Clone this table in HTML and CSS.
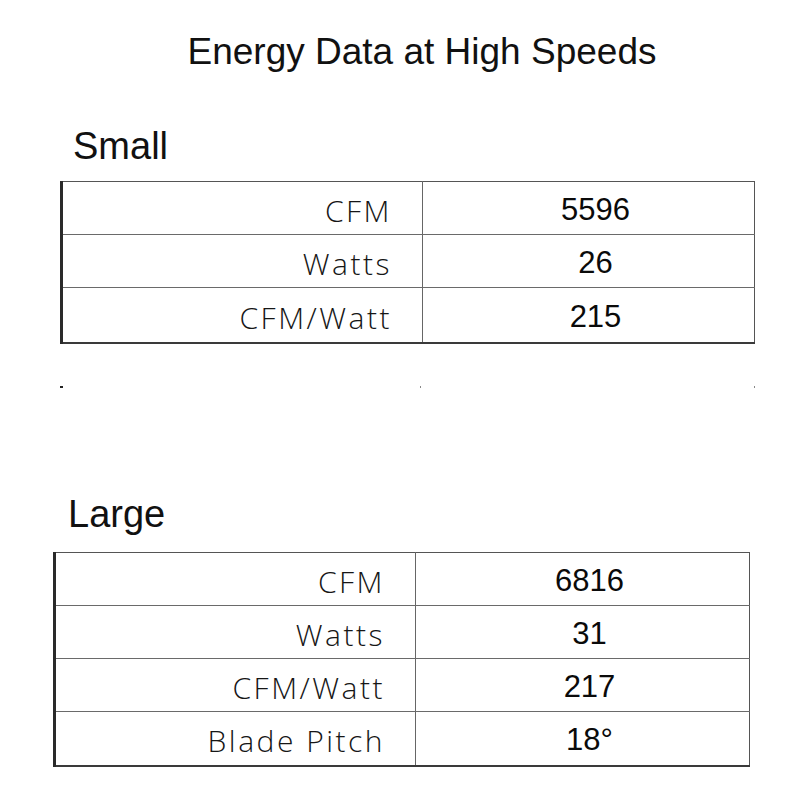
FILE: index.html
```html
<!DOCTYPE html>
<html>
<head>
<meta charset="utf-8">
<link rel="stylesheet" href="styles.css">
</head>
<body>
<div class="page">
  <h1 class="title">Energy Data at High Speeds</h1>

  <h2 class="heading heading-small">Small</h2>
  <table class="data data-small">
    <tr><td class="label">CFM</td><td class="value">5596</td></tr>
    <tr><td class="label">Watts</td><td class="value">26</td></tr>
    <tr><td class="label">CFM/Watt</td><td class="value">215</td></tr>
  </table>
  <div class="stub">
    <span class="mark mark-dark"></span>
    <span class="mark mark-mid"></span>
    <span class="mark mark-end"></span>
  </div>

  <h2 class="heading heading-large">Large</h2>
  <table class="data data-large">
    <tr><td class="label">CFM</td><td class="value">6816</td></tr>
    <tr><td class="label">Watts</td><td class="value">31</td></tr>
    <tr><td class="label">CFM/Watt</td><td class="value">217</td></tr>
    <tr><td class="label">Blade Pitch</td><td class="value">18°</td></tr>
  </table>
</div>
</body>
</html>
```

FILE: styles.css
```css
html, body {
  margin: 0;
  padding: 0;
  background: #ffffff;
}

.page {
  width: 800px;
  height: 800px;
  font-family: "Liberation Sans", Arial, sans-serif;
  color: #111;
}

.title {
  margin: 30px 0 0 0;
  padding-left: 44px;
  font-size: 37px;
  line-height: 44px;
  font-weight: 400;
  text-align: center;
}

.heading {
  margin: 0;
  font-size: 38px;
  line-height: 44px;
  font-weight: 400;
}

.heading-small {
  margin-top: 50px;
  margin-left: 73px;
}

.heading-large {
  margin-top: 103px;
  margin-left: 68px;
}

.data {
  border-collapse: collapse;
  table-layout: fixed;
  border-top: 1px solid #555;
  border-right: 1px solid #555;
  border-left: 3px solid #2a2a2a;
  border-bottom: 2px solid #3a3a3a;
}

.data-small {
  margin-top: 13px;
  margin-left: 60px;
  width: 695px;
}

.data-large {
  margin-top: 16px;
  margin-left: 53px;
  width: 697px;
}

.data td {
  height: 48px;
  padding: 0;
  border-bottom: 1px solid #6a6a6a;
  vertical-align: middle;
}

.data-small tr:last-child td {
  border-bottom: none;
  height: 50px;
}

.data-large tr:last-child td {
  border-bottom: none;
  height: 49px;
}

.data-small .label { width: 329px; }
.data-large .label { width: 329px; }

.label {
  text-align: right;
  padding-right: 30px !important;
  padding-top: 4px !important;
  border-right: 1px solid #666;
  font-family: "Open Sans", sans-serif;
  font-weight: 300;
  font-size: 30px;
  letter-spacing: 2.5px;
  color: #161616;
}

.value {
  text-align: center;
  padding-left: 14px !important;
  padding-top: 3px !important;
  font-size: 31px;
  color: #0a0a0a;
}

.stub {
  margin-top: 42px;
  margin-left: 60px;
  width: 695px;
  height: 3px;
  display: flex;
  align-items: flex-start;
}

.mark {
  display: block;
  height: 2px;
}

.mark-dark {
  width: 3px;
  background: #222;
}

.mark-mid {
  width: 1px;
  background: #888;
  margin-left: 357px;
}

.mark-end {
  width: 1px;
  background: #888;
  margin-left: auto;
}
```
